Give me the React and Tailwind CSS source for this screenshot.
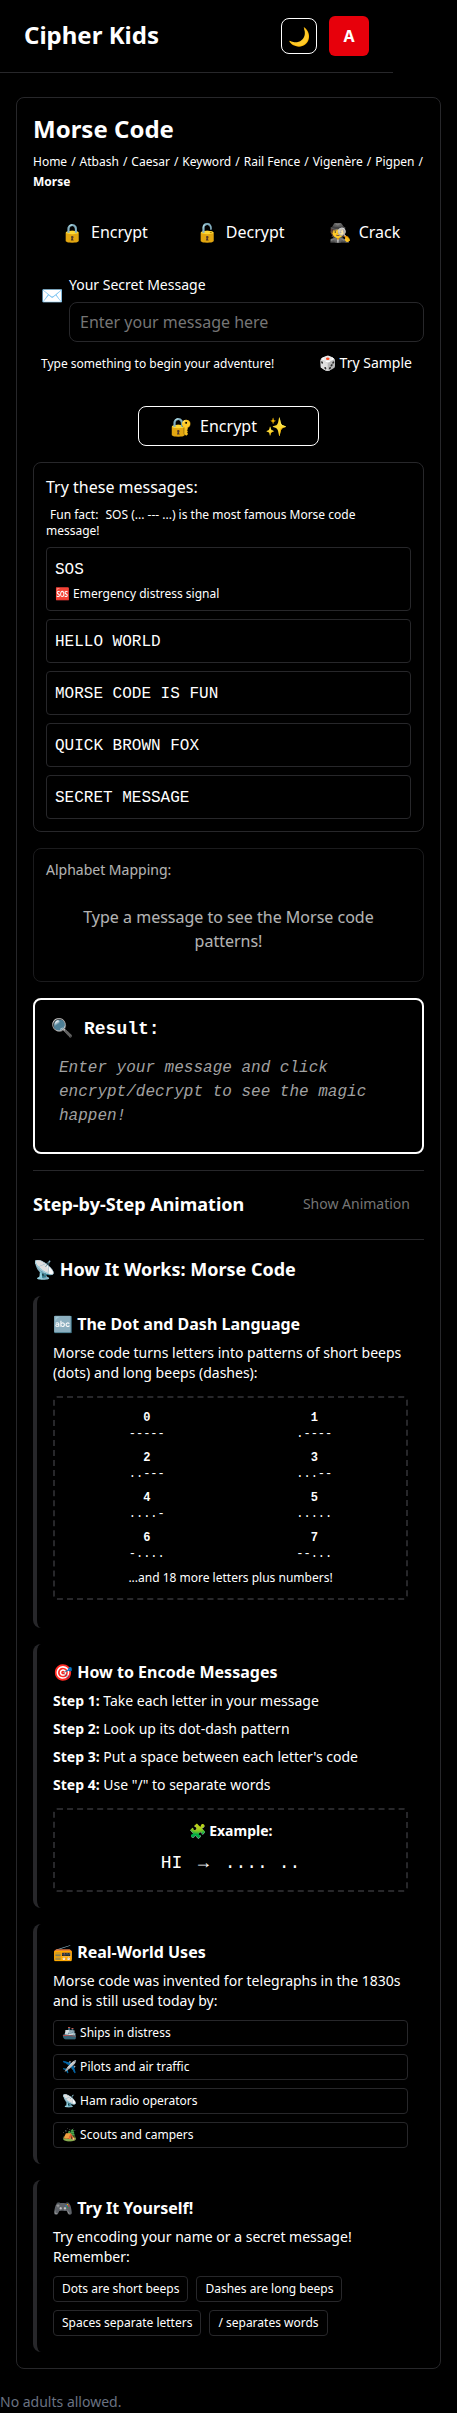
const MONO = "font-['Liberation_Mono',monospace]";

const crumbs = ["Home", "Atbash", "Caesar", "Keyword", "Rail Fence", "Vigenère", "Pigpen"];
const tabs = [
  ["🔒", "Encrypt"],
  ["🔓", "Decrypt"],
  ["🕵️", "Crack"],
];
const samples = ["HELLO WORLD", "MORSE CODE IS FUN", "QUICK BROWN FOX", "SECRET MESSAGE"];
const digits = [
  ["0", "-----"],
  ["1", ".----"],
  ["2", "..---"],
  ["3", "...--"],
  ["4", "....-"],
  ["5", "....."],
  ["6", "-...."],
  ["7", "--..."],
];
const steps = [
  "Take each letter in your message",
  "Look up its dot-dash pattern",
  "Put a space between each letter's code",
  'Use "/" to separate words',
];
const uses = ["🚢 Ships in distress", "✈️ Pilots and air traffic", "📡 Ham radio operators", "🏕️ Scouts and campers"];
const hints = ["Dots are short beeps", "Dashes are long beeps", "Spaces separate letters", "/ separates words"];

function Section({ title, children }) {
  return (
    <section className="rounded-lg border-l-4 border-[#27272a] p-4">
      <h4 className="mb-[7px] h-6 text-base font-bold leading-6">{title}</h4>
      {children}
    </section>
  );
}

function Chip({ children }) {
  return (
    <div className="h-[26px] whitespace-nowrap rounded border border-[#27272a] px-2 py-1 text-xs leading-4">
      {children}
    </div>
  );
}

export default function App() {
  return (
    <div className="min-h-[2413px] w-[457px] overflow-hidden bg-black font-['Noto_Sans',sans-serif] text-white">
      <header className="flex h-[73px] w-[393px] items-center justify-between border-b border-[#27272a] px-6">
        <h1 className="pb-0.5 text-2xl font-bold leading-8">Cipher Kids</h1>
        <div className="flex items-center gap-3">
          <button className="flex size-9 items-center justify-center rounded-lg border border-white text-lg">🌙</button>
          <button className="flex size-10 items-center justify-center rounded-md bg-[#e7000b] text-base font-bold">A</button>
        </div>
      </header>

      <main className="px-4 pt-6">
        <div className="rounded-lg border border-[#27272a] p-4">
          <h2 className="-mt-px text-2xl font-bold leading-8">Morse Code</h2>
          <nav className="mt-[7px] flex h-10 flex-wrap gap-x-1 text-xs leading-5">
            {crumbs.map((c) => (
              <span key={c} className="flex gap-1">
                <a>{c}</a>
                <span>/</span>
              </span>
            ))}
            <b>Morse</b>
          </nav>

          <div className="mt-5 flex h-10 items-center gap-11 pl-7">
            {tabs.map(([icon, name]) => (
              <button key={name} className="flex items-center gap-2 text-base leading-6 first:mr-1">
                <span className="text-lg leading-6">{icon}</span>
                <span>{name}</span>
              </button>
            ))}
          </div>

          <div className="mt-6 flex h-[66px] gap-1.5 pl-2">
            <span className="mt-[7px] h-6 w-[22px] whitespace-nowrap text-lg leading-6">✉️</span>
            <div className="-mt-px flex-1">
              <label className="mb-[7px] block text-sm leading-5">Your Secret Message</label>
              <input
                className="block h-10 w-full rounded-lg border border-[#27272a] bg-black px-2.5 text-base placeholder:text-[#757575]"
                placeholder="Enter your message here"
              />
            </div>
          </div>

          <div className="mt-2 flex h-7 items-center justify-between pl-2 pr-3">
            <span className="text-xs leading-4">Type something to begin your adventure!</span>
            <button className="pb-0.5 text-sm leading-5">🎲 Try Sample</button>
          </div>

          <div className="mt-7 flex justify-center">
            <button className="flex h-10 w-[181px] items-center justify-center gap-2 rounded-lg border border-white text-base">
              <span className="text-lg leading-6">🔐</span>
              <span>Encrypt</span>
              <span className="text-lg leading-6">✨</span>
            </button>
          </div>

          <div className="mt-4 rounded-lg border border-[#27272a] p-3">
            <h3 className="mb-2 text-base leading-6">Try these messages:</h3>
            <p className="mb-2 text-xs leading-4">
              <span className="ml-1 mr-1">Fun fact:</span> SOS (... --- ...) is the most famous Morse code message!
            </p>
            <div className="flex flex-col gap-2">
              <div className="h-16 rounded border border-[#27272a] px-2 pt-2.5">
                <div className={`text-base leading-6 ${MONO}`}>SOS</div>
                <div className="mt-1 text-xs leading-4">🆘 Emergency distress signal</div>
              </div>
              {samples.map((s) => (
                <div key={s} className={`h-11 rounded border border-[#27272a] px-2 pt-2.5 text-base leading-6 ${MONO}`}>
                  {s}
                </div>
              ))}
            </div>
          </div>

          <div className="mt-4 h-[134px] rounded-lg border border-[#27272a] p-3 opacity-70">
            <h3 className="-mt-px mb-[9px] text-sm leading-5">Alphabet Mapping:</h3>
            <p className="p-4 text-center text-base leading-6">Type a message to see the Morse code patterns!</p>
          </div>

          <div className={`mt-4 h-[156px] rounded-lg border-2 border-white px-4 pt-[15px] ${MONO}`}>
            <h3 className="flex h-7 items-center gap-3 text-lg font-bold leading-7">
              <span className="w-[21px] text-lg">🔍</span>
              <span>Result:</span>
            </h3>
            <p className="mt-[13px] pl-2 text-base italic leading-6 text-[#a1a1a1]">
              Enter your message and click encrypt/decrypt to see the magic happen!
            </p>
          </div>

          <div className="mt-4 flex h-[70px] items-center justify-between border-y border-[#27272a] pb-0.5 pr-3.5">
            <h3 className="text-lg font-bold leading-7">Step-by-Step Animation</h3>
            <button className="text-sm leading-5 text-[#757575]">Show Animation</button>
          </div>

          <h3 className="mb-[13px] mt-[15px] h-7 text-lg font-bold leading-7">📡 How It Works: Morse Code</h3>

          <div className="flex flex-col gap-4">
            <Section title="🔤 The Dot and Dash Language">
              <p className="text-sm leading-5">
                Morse code turns letters into patterns of short beeps (dots) and long beeps (dashes):
              </p>
              <div className="mb-3 mt-[13px] rounded border-2 border-dashed border-[#27272a] p-3 text-center">
                <div className={`grid grid-cols-2 gap-2 text-xs leading-4 ${MONO}`}>
                  {digits.map(([d, code]) => (
                    <div key={d}>
                      <div className="font-bold">{d}</div>
                      <div>{code}</div>
                    </div>
                  ))}
                </div>
                <p className="mt-2 text-xs leading-4">...and 18 more letters plus numbers!</p>
              </div>
            </Section>

            <Section title="🎯 How to Encode Messages">
              <div className="flex flex-col gap-2 text-sm leading-5">
                {steps.map((s, i) => (
                  <p key={s}>
                    <b>Step {i + 1}:</b> {s}
                  </p>
                ))}
              </div>
              <div className="mt-[13px] h-[84px] rounded border-2 border-dashed border-[#27272a] px-3 pt-[11px] text-center">
                <p className="mb-2 h-5 text-sm font-bold leading-5">🧩 Example:</p>
                <p className={`text-lg leading-7 ${MONO}`}>
                  HI <span className="mx-[5px]">→</span> .... ..
                </p>
              </div>
            </Section>

            <Section title="📻 Real-World Uses">
              <p className="mb-[9px] text-sm leading-5">
                Morse code was invented for telegraphs in the 1830s and is still used today by:
              </p>
              <div className="flex flex-col gap-2">
                {uses.map((u) => (
                  <Chip key={u}>{u}</Chip>
                ))}
              </div>
            </Section>

            <Section title="🎮 Try It Yourself!">
              <p className="mb-[9px] text-sm leading-5">Try encoding your name or a secret message! Remember:</p>
              <div className="flex flex-wrap gap-2">
                {hints.map((h) => (
                  <Chip key={h}>{h}</Chip>
                ))}
              </div>
            </Section>
          </div>
        </div>
      </main>

      <footer className="mt-[23px] h-5 text-sm leading-5 text-[#6a7282]">No adults allowed.</footer>
    </div>
  );
}
